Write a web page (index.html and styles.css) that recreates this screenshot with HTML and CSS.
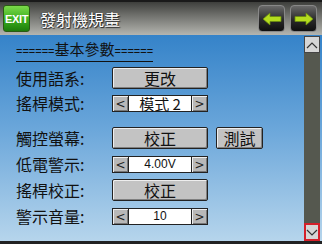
FILE: index.html
```html
<!DOCTYPE html>
<html>
<head>
<meta charset="utf-8">
<link rel="stylesheet" href="styles.css">
</head>
<body>
<div class="screen">
  <header class="top">
    <div class="exit">EXIT</div>
    <div class="title">發射機規畫</div>
    <div class="navs">
      <div class="nav"><svg width="20" height="14" viewBox="0 0 20 14"><path d="M1 7 L8 1 L8 4.5 L19 4.5 L19 9.5 L8 9.5 L8 13 Z" fill="#b4dc1e" stroke="#6a8a10" stroke-width="0.8"/></svg></div>
      <div class="nav"><svg width="20" height="14" viewBox="0 0 20 14"><path d="M19 7 L12 1 L12 4.5 L1 4.5 L1 9.5 L12 9.5 L12 13 Z" fill="#b4dc1e" stroke="#6a8a10" stroke-width="0.8"/></svg></div>
    </div>
  </header>
  <div class="body">
    <main class="content">
      <div class="section"><span class="eq">======</span>基本參數<span class="eq">======</span></div>
      <div class="row r1">
        <span class="label">使用語系:</span>
        <div class="btn wide">更改</div>
      </div>
      <div class="row r2">
        <span class="label">搖桿模式:</span>
        <div class="spin"><span class="arr">&lt;</span><span class="val">模式 2</span><span class="arr">&gt;</span></div>
      </div>
      <div class="row r3">
        <span class="label">觸控螢幕:</span>
        <div class="btn wide">校正</div>
        <div class="btn small">測試</div>
      </div>
      <div class="row r4">
        <span class="label">低電警示:</span>
        <div class="spin"><span class="arr">&lt;</span><span class="val num">4.00V</span><span class="arr">&gt;</span></div>
      </div>
      <div class="row r5">
        <span class="label">搖桿校正:</span>
        <div class="btn wide">校正</div>
      </div>
      <div class="row r6">
        <span class="label">警示音量:</span>
        <div class="spin"><span class="arr">&lt;</span><span class="val num">10</span><span class="arr">&gt;</span></div>
      </div>
    </main>
    <aside class="scroll">
      <div class="sbtn up"><svg width="12" height="8" viewBox="0 0 12 8"><path d="M1 7 L6 2 L11 7" fill="none" stroke="#333" stroke-width="1.2"/></svg></div>
      <div class="track"></div>
      <div class="sbtn down"><svg width="12" height="8" viewBox="0 0 12 8"><path d="M1 2 L6 7 L11 2" fill="none" stroke="#333" stroke-width="1.2"/></svg></div>
    </aside>
  </div>
</div>
</body>
</html>
```
FILE: styles.css
```css
* { box-sizing: border-box; margin: 0; padding: 0; }
html, body { width: 322px; height: 244px; overflow: hidden; }
body { font-family: "Noto Sans CJK TC", "Noto Sans", sans-serif; background: #111; }
.screen { width: 322px; height: 244px; display: flex; flex-direction: column; }
.top {
  height: 35px;
  border-top: 2px solid #1a1a1a;
  background: linear-gradient(#3e3f3c, #6f706c 40%, #b4b5b0);
  display: flex; align-items: center; padding-left: 3px;
}
.exit {
  width: 27px; height: 27px; border-radius: 3px;
  background: linear-gradient(#7ad84a, #3aae1c 55%, #1d7c0c);
  border: 1px solid #2a5a14;
  color: #fff; font-family: "Liberation Sans", sans-serif; font-weight: bold; font-size: 11px;
  display: flex; align-items: center; justify-content: center; letter-spacing: -0.3px;
}
.title {
  margin-left: 10px; color: #fff; font-size: 16px;
  text-shadow: 1px 1px 1px #222, -1px 0 1px #444;
}
.navs { margin-left: auto; display: flex; gap: 5px; margin-right: 5px; }
.nav {
  width: 27px; height: 27px; border-radius: 4px;
  background: linear-gradient(#6a6a6a, #2a2a2a 55%, #0e0e0e);
  border: 1px solid #888;
  display: flex; align-items: center; justify-content: center;
}
.body {
  flex: 1; display: flex;
  background: linear-gradient(#3583c9, #6aa6da 45%, #b6d5ec);
  border-bottom: 3px solid #222;
}
.content { flex: 1; padding-left: 16px; padding-top: 5px; display: flex; flex-direction: column; }
.section {
  align-self: flex-start;
  font-size: 15px; line-height: 18px; color: #111;
  border-bottom: 1px solid #111; padding-bottom: 1px; white-space: nowrap;
}
.eq { font-family: "Liberation Sans", sans-serif; font-size: 11px; letter-spacing: 0; }
.row { display: flex; align-items: center; }
.label { width: 96px; font-size: 16px; line-height: 17px; color: #111; }
.r1 { height: 22px; margin-top: 5px; }
.r2 { height: 17px; margin-top: 6px; }
.r3 { height: 22px; margin-top: 15px; }
.r4 { height: 17px; margin-top: 7px; }
.r5 { height: 22px; margin-top: 6px; }
.r6 { height: 17px; margin-top: 7px; }
.btn {
  height: 22px; background: #c3c3c3; border: 1px solid #222; border-radius: 2px;
  box-shadow: inset 1px 1px 0 #eee, inset -1px -1px 0 #808080;
  display: flex; align-items: center; justify-content: center;
  font-size: 16px; color: #111;
}
.wide { width: 96px; }
.small { width: 47px; margin-left: 8px; }
.spin { width: 96px; height: 17px; display: flex; border: 1px solid #222; }
.arr {
  width: 15px; background: #b8b8b8; font-family: "DejaVu Sans", sans-serif; font-size: 12px;
  display: flex; align-items: center; justify-content: center; color: #222;
  box-shadow: inset 1px 1px 0 #eee, inset -1px -1px 0 #777;
}
.val {
  flex: 1; background: #fff; border-left: 1px solid #222; border-right: 1px solid #222;
  display: flex; align-items: center; justify-content: center; font-size: 15px; line-height: 15px; color: #111;
}
.num { font-family: "Liberation Sans", sans-serif; font-size: 12px; }
.scroll { width: 16px; margin-right: 2px; display: flex; flex-direction: column; }
.sbtn {
  height: 17px; background: #d6d6d6; border: 1px solid #444;
  display: flex; align-items: center; justify-content: center;
}
.up { margin-top: 1px; }
.track { flex: 1; background: #55584f; }
.down { border: 2px solid #d4202a; height: 18px; }
```
